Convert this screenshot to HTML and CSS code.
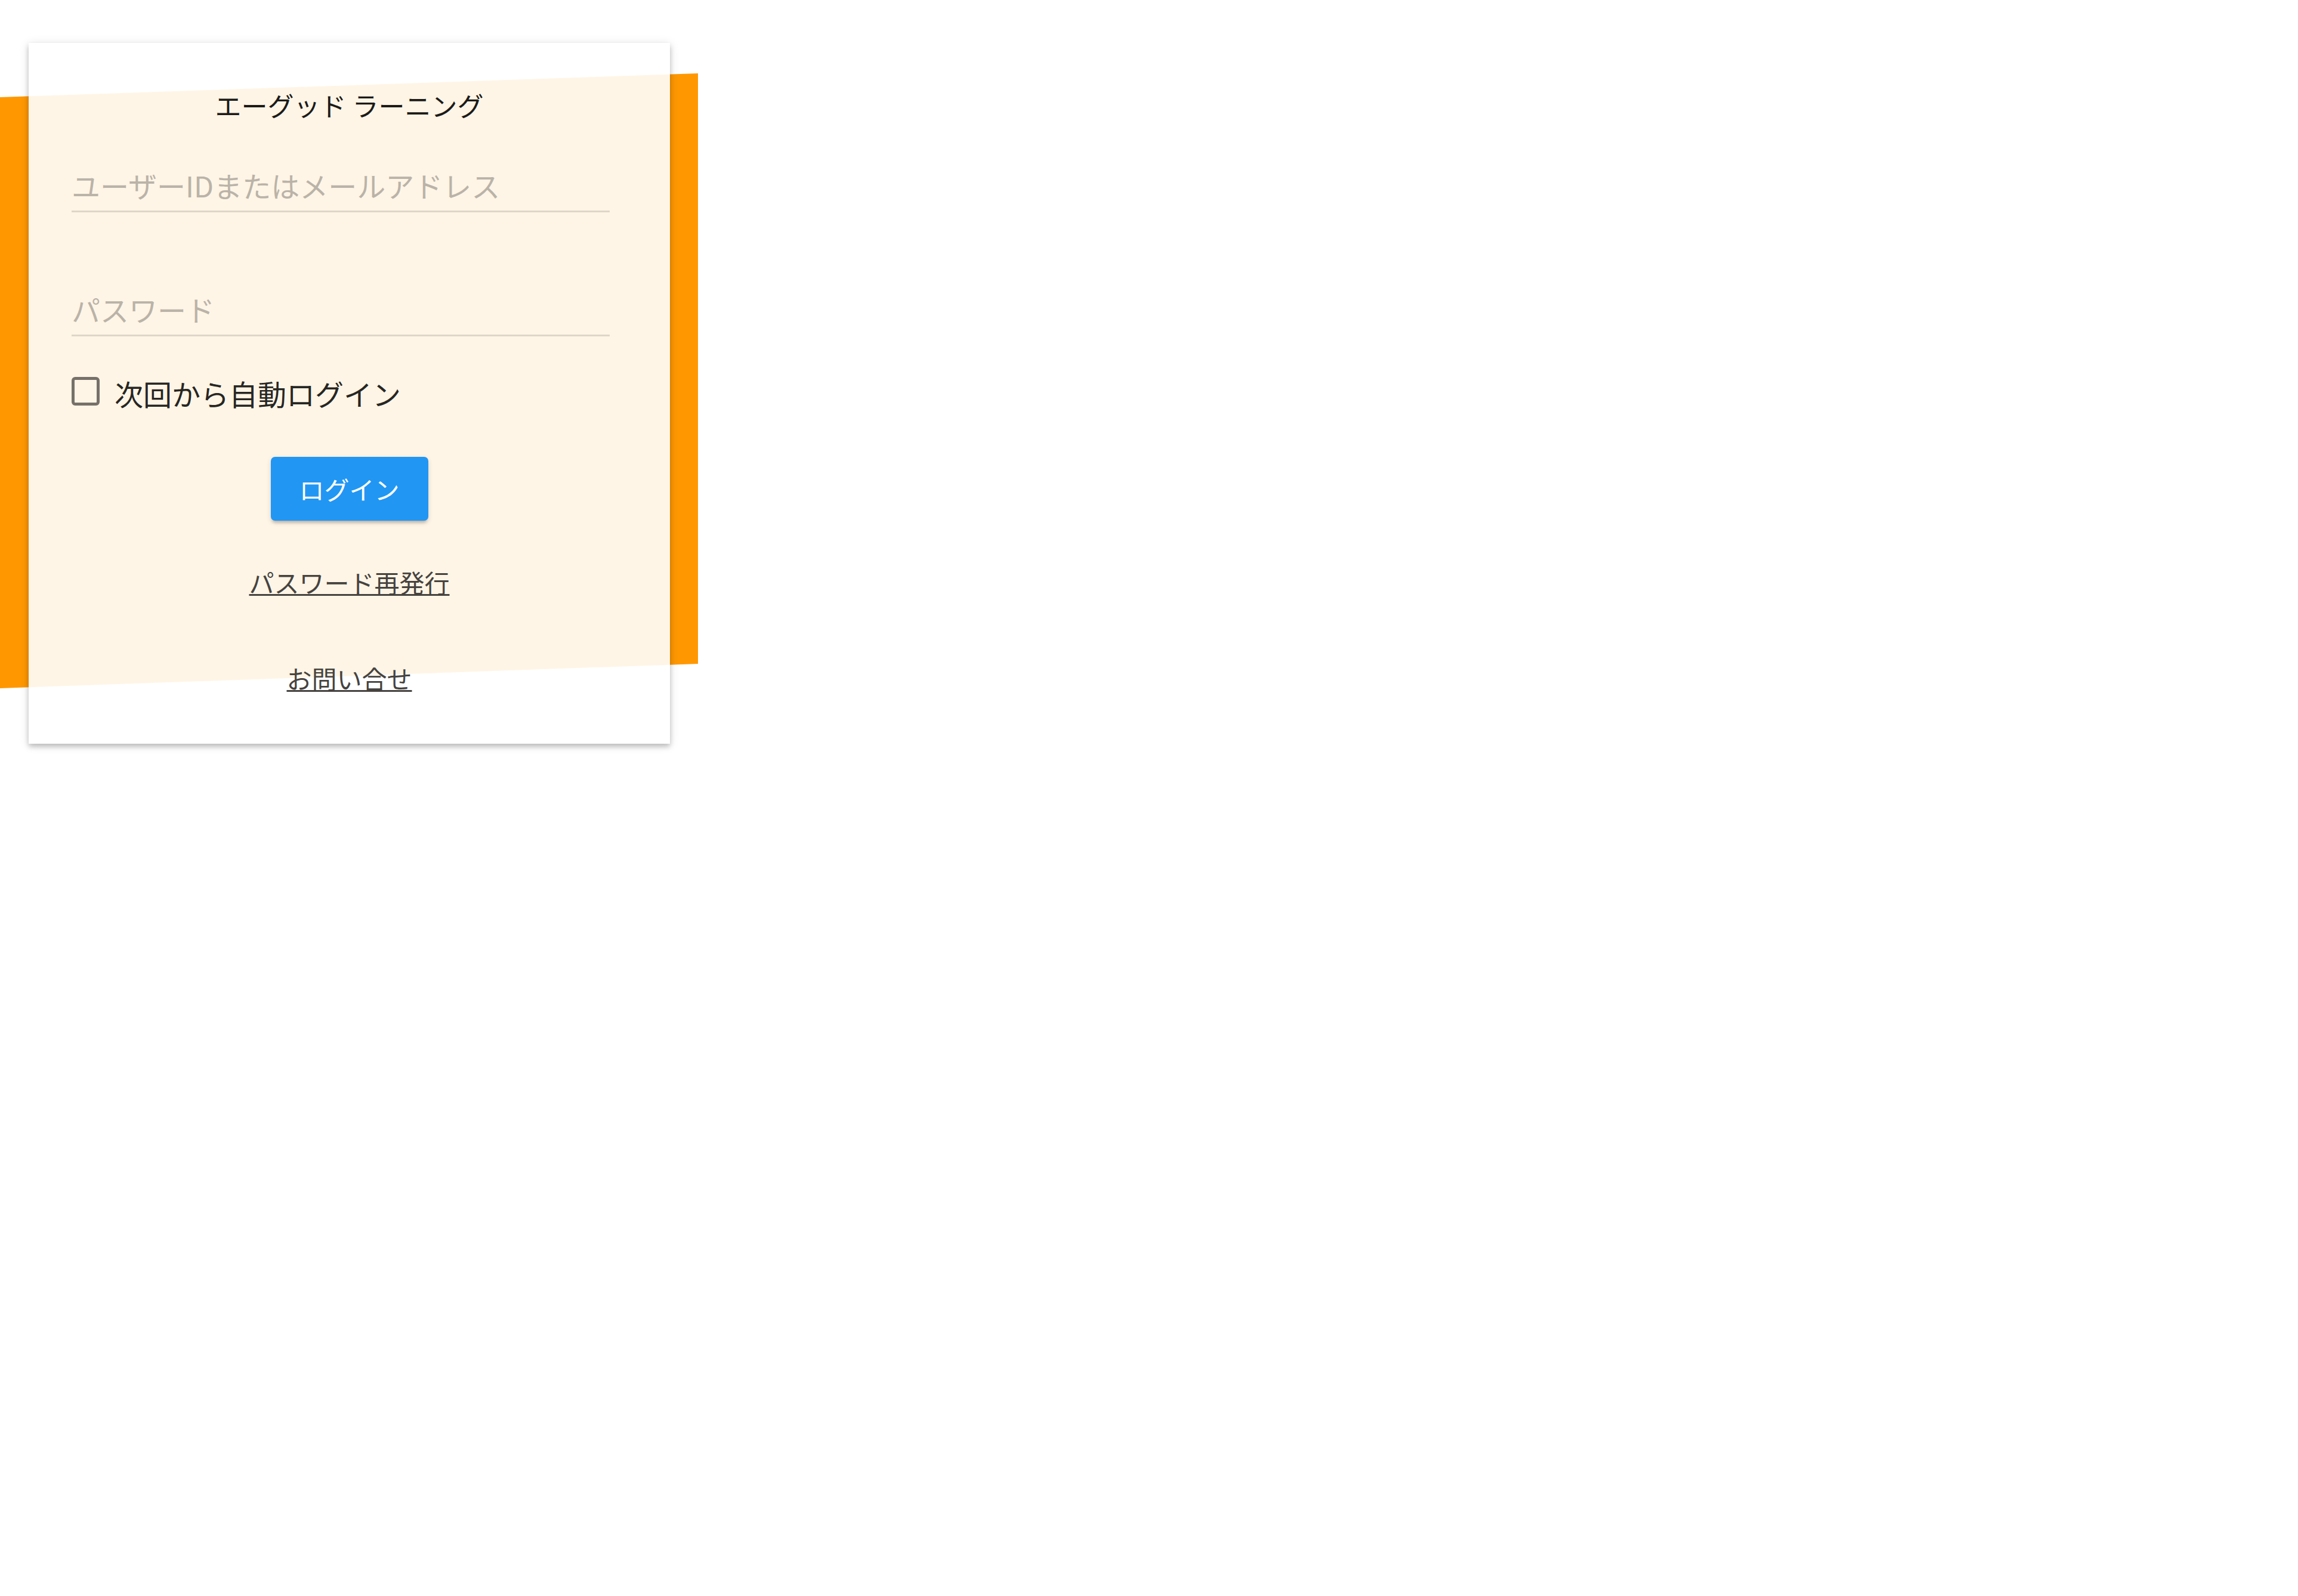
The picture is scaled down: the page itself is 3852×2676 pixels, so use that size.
FILE: index.html
```html
<!DOCTYPE html>
<html lang="ja">
  <head>
    <meta charset="UTF-8" />
    <meta name="viewport" content="width=device-width, initial-scale=1.0" />
    <title>エーグッド ラーニング</title>
    <link rel="stylesheet" href="styles.css">
  </head>
  <body>
    <div class="stage">
      <div class="band"></div>

      <div class="card">
        <h1 class="card-title">エーグッド ラーニング</h1>

        <form class="login-form">
          <input class="field" name="user" type="text" placeholder="ユーザーIDまたはメールアドレス" />
          <input class="field field-password" name="password" type="password" placeholder="パスワード" />

          <label class="remember">
            <input class="check" type="checkbox" name="remember" />
            <span class="remember-text">次回から自動ログイン</span>
          </label>

          <div class="actions">
            <button class="login-btn" type="submit">ログイン</button>
          </div>
        </form>

        <div class="links">
          <a class="link" href="#">パスワード再発行</a>
          <a class="link link-contact" href="#">お問い合せ</a>
        </div>
      </div>
    </div>
  </body>
</html>
```

FILE: styles.css
```css
/* 基本 */
body {
  margin: 0;
  background: #fff;
  font-family: "Noto Sans CJK JP", "Noto Sans", sans-serif;
  color: rgba(0, 0, 0, 0.87);
}

/* カードとオレンジの帯 */
.stage {
  position: relative;
  padding: 72px 0 40px 48px;
}
.band {
  position: absolute;
  left: 0;
  top: 123px;
  width: 1170px;
  height: 1031px;
  background: #ff9800;
  clip-path: polygon(0 40px, 100% 0, 100% 990px, 0 100%);
}
.card {
  position: relative;
  width: 1075px;
  box-sizing: border-box;
  padding: 74px 101px 85px 72px;
  background: rgba(255, 255, 255, 0.9);
  box-shadow: 0 5px 8px rgba(0, 0, 0, 0.2), 0 2px 16px rgba(0, 0, 0, 0.12);
}

/* タイトル */
.card-title {
  margin: 0 -29px 0 0;
  text-align: center;
  font-size: 44px;
  line-height: 60px;
  font-weight: 400;
  color: #1c1b19;
}

/* 入力欄 */
.login-form {
  display: flex;
  flex-direction: column;
}
.field {
  display: block;
  width: 100%;
  box-sizing: border-box;
  margin: 74px 0 0 0;
  padding: 0 0 13px 0;
  height: 76px;
  border: none;
  border-bottom: 3px solid #ded6c9;
  background: transparent;
  font-family: inherit;
  font-size: 48px;
  line-height: 60px;
  color: rgba(0, 0, 0, 0.87);
  outline: none;
}
.field::placeholder {
  color: #bab3a8;
}
.field-password {
  margin-top: 132px;
}

/* チェックボックス */
.remember {
  display: flex;
  align-items: flex-start;
  gap: 25px;
  margin-top: 68px;
}
.check {
  appearance: none;
  margin: 0;
  width: 47px;
  height: 48px;
  box-sizing: border-box;
  border: 5px solid rgba(0, 0, 0, 0.54);
  border-radius: 6px;
  background: transparent;
}
.remember-text {
  margin-top: 3px;
  font-size: 48px;
  line-height: 48px;
  color: rgba(0, 0, 0, 0.87);
}

/* ボタン */
.actions {
  display: flex;
  justify-content: center;
  margin: 83px -29px 0 0;
}
.login-btn {
  width: 264px;
  height: 107px;
  border: none;
  border-radius: 7px;
  background: #2196f3;
  color: #fff;
  font-family: inherit;
  font-size: 42px;
  line-height: 1;
  box-shadow: 0 6px 5px -3px rgba(0, 0, 0, 0.2), 0 3px 8px rgba(0, 0, 0, 0.14);
}

/* リンク */
.links {
  display: flex;
  flex-direction: column;
  align-items: center;
  margin: 78px -29px 0 0;
}
.link {
  font-size: 42px;
  line-height: 50px;
  color: #46433f;
  text-decoration: underline;
  text-decoration-thickness: 3px;
}
.link-contact {
  margin-top: 111px;
}
```
